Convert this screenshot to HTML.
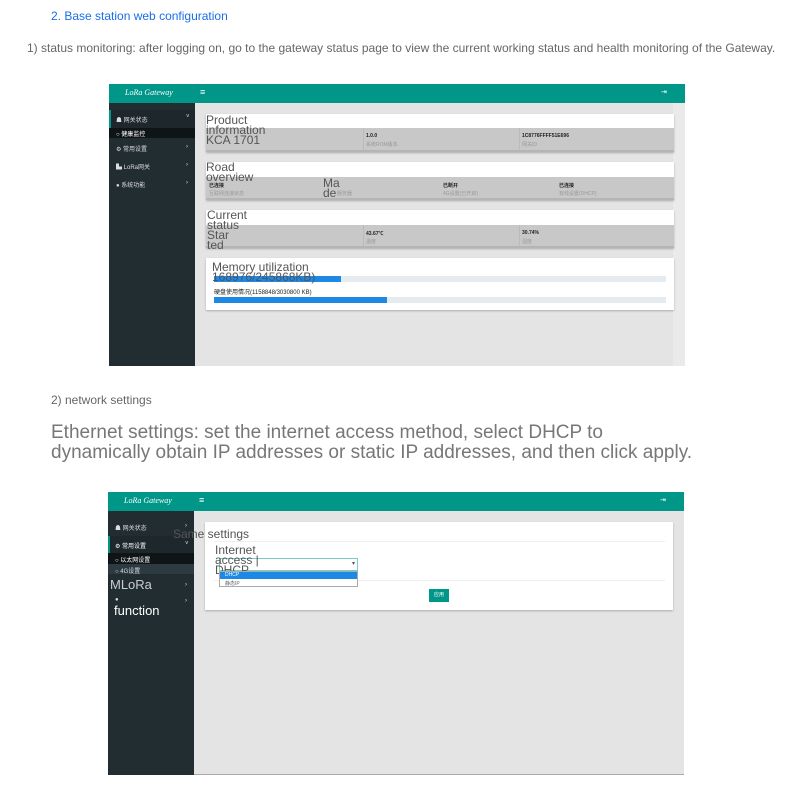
<!DOCTYPE html>
<html><head><meta charset="utf-8"><style>
*{margin:0;padding:0;box-sizing:border-box}
body{width:791px;height:788px;background:#fff;position:relative;overflow:hidden;font-family:"Liberation Sans","Noto Sans CJK SC",sans-serif;color:#555}
.a{position:absolute;white-space:nowrap}
.hdr{background:#009688}
.side{background:#222d32}
.cnt{background:#e4e4e4}
.card{background:#fff;box-shadow:0 1px 2px rgba(0,0,0,.25)}
.row{background:#c8c8c8;border-bottom:2px solid #b5b5b5}
.s{font-size:5px;color:#222;font-weight:bold}
.t{font-size:5px;color:#999}
.m{font-size:6px;color:#ddd}
.big{font-size:12px;color:#555;line-height:10px}
</style></head><body>
<div class="a" style="left:51px;top:9px;font-size:12px;color:#1a6ee8">2. Base station web configuration</div>
<div class="a" style="left:27px;top:41px;font-size:12px;color:#666">1) status monitoring: after logging on, go to the gateway status page to view the current working status and health monitoring of the Gateway.</div>

<div class="a cnt" style="left:109px;top:84px;width:576px;height:282px"></div>
<div class="a" style="left:673px;top:102px;width:12px;height:264px;background:#eaeaea"></div>
<div class="a hdr" style="left:109px;top:84px;width:576px;height:19px"></div>
<div class="a" style="left:125px;top:88px;font-size:8px;color:#fff;font-style:italic;font-family:'Liberation Serif',serif">LoRa Gateway</div>
<div class="a" style="left:200px;top:87px;font-size:9px;color:#fff">≡</div>
<div class="a" style="left:661px;top:88px;font-size:7px;color:#fff">⇥</div>
<div class="a side" style="left:109px;top:103px;width:86px;height:263px"></div>
<div class="a" style="left:109px;top:110px;width:86px;height:18px;background:#1e282c;border-left:2px solid #009688"></div>
<div class="a" style="left:109px;top:128px;width:86px;height:10px;background:#0f1517"></div>
<div class="a m" style="left:116px;top:115px">☗ 网关状态</div><div class="a m" style="left:186px;top:114px">˅</div>
<div class="a m" style="left:116px;top:129px;color:#fff">○ 健康监控</div>
<div class="a m" style="left:116px;top:144px">⚙ 常用设置</div><div class="a m" style="left:186px;top:144px">›</div>
<div class="a m" style="left:116px;top:162px">▙ LoRa网关</div><div class="a m" style="left:186px;top:162px">›</div>
<div class="a m" style="left:116px;top:180px">● 系统功能</div><div class="a m" style="left:186px;top:180px">›</div>

<div class="a card" style="left:206px;top:114px;width:468px;height:38px"></div>
<div class="a row" style="left:206px;top:128px;width:468px;height:24px"></div>
<div class="a" style="left:363px;top:128px;width:1px;height:22px;background:#bbb"></div>
<div class="a" style="left:519px;top:128px;width:1px;height:22px;background:#bbb"></div>
<div class="a big" style="left:206px;top:115px">Product<br>information<br>KCA 1701</div>
<div class="a s" style="left:366px;top:133px">1.0.0</div><div class="a t" style="left:366px;top:141px">系统ROM版本</div>
<div class="a s" style="left:522px;top:133px">1C8776FFFF51E696</div><div class="a t" style="left:522px;top:141px">网关ID</div>

<div class="a card" style="left:206px;top:162px;width:468px;height:38px"></div>
<div class="a row" style="left:206px;top:177px;width:468px;height:23px"></div>
<div class="a big" style="left:206px;top:162px">Road<br>overview</div>
<div class="a s" style="left:209px;top:182px">已连接</div><div class="a t" style="left:209px;top:190px">互联网连接状态</div>
<div class="a big" style="left:323px;top:178px">Ma<br>de</div><div class="a t" style="left:337px;top:190px">服务器</div>
<div class="a s" style="left:443px;top:182px">已断开</div><div class="a t" style="left:443px;top:190px">4G设置(已开启)</div>
<div class="a s" style="left:559px;top:182px">已连接</div><div class="a t" style="left:559px;top:190px">有线设置(DHCP)</div>

<div class="a card" style="left:206px;top:210px;width:468px;height:38px"></div>
<div class="a row" style="left:206px;top:225px;width:468px;height:23px"></div>
<div class="a" style="left:363px;top:225px;width:1px;height:21px;background:#bbb"></div>
<div class="a" style="left:519px;top:225px;width:1px;height:21px;background:#bbb"></div>
<div class="a big" style="left:207px;top:210px">Current<br>status<br>Star<br>ted</div>
<div class="a s" style="left:366px;top:230px">43.67℃</div><div class="a t" style="left:366px;top:238px">温度</div>
<div class="a s" style="left:522px;top:230px">30.74%</div><div class="a t" style="left:522px;top:238px">湿度</div>

<div class="a card" style="left:206px;top:258px;width:468px;height:52px"></div>
<div class="a" style="left:214px;top:276px;width:452px;height:6px;background:#e6ebef"></div>
<div class="a" style="left:214px;top:276px;width:127px;height:6px;background:#1e88e5"></div>
<div class="a big" style="left:212px;top:262px">Memory utilization<br>168976/245868KB)</div>
<div class="a" style="left:214px;top:287px;font-size:6px;color:#222">硬盘使用情况(1158848/3030800 KB)</div>
<div class="a" style="left:214px;top:297px;width:452px;height:6px;background:#e6ebef"></div>
<div class="a" style="left:214px;top:297px;width:173px;height:6px;background:#1e88e5"></div>

<div class="a" style="left:51px;top:393px;font-size:12px;color:#666">2) network settings</div>
<div class="a" style="left:51px;top:423px;font-size:19px;color:#777;line-height:20px">Ethernet settings: set the internet access method, select DHCP to<br>dynamically obtain IP addresses or static IP addresses, and then click apply.</div>

<div class="a cnt" style="left:108px;top:492px;width:576px;height:283px;border-bottom:1px solid #aaa"></div>
<div class="a hdr" style="left:108px;top:492px;width:576px;height:19px"></div>
<div class="a" style="left:124px;top:496px;font-size:8px;color:#fff;font-style:italic;font-family:'Liberation Serif',serif">LoRa Gateway</div>
<div class="a" style="left:199px;top:495px;font-size:9px;color:#fff">≡</div>
<div class="a" style="left:660px;top:496px;font-size:7px;color:#fff">⇥</div>
<div class="a side" style="left:108px;top:511px;width:86px;height:264px"></div>
<div class="a" style="left:108px;top:536px;width:86px;height:17px;background:#1e282c;border-left:2px solid #009688"></div>
<div class="a" style="left:108px;top:553px;width:86px;height:11px;background:#0f1517"></div>
<div class="a" style="left:108px;top:564px;width:86px;height:10px;background:#2c3b41"></div>
<div class="a m" style="left:115px;top:523px">☗ 网关状态</div><div class="a m" style="left:185px;top:523px">›</div>
<div class="a m" style="left:115px;top:541px;color:#fff">⚙ 常用设置</div><div class="a m" style="left:185px;top:541px">˅</div>
<div class="a m" style="left:115px;top:555px;color:#fff">○ 以太网设置</div>
<div class="a m" style="left:115px;top:566px">○ 4G设置</div>
<div class="a" style="left:110px;top:577px;font-size:13px;color:#ccc">MLoRa</div><div class="a m" style="left:185px;top:582px">›</div>
<div class="a m" style="left:115px;top:597px">●</div><div class="a m" style="left:185px;top:598px">›</div>
<div class="a" style="left:114px;top:603px;font-size:13px;color:#fff">function</div>

<div class="a card" style="left:205px;top:522px;width:468px;height:88px"></div>
<div class="a" style="left:173px;top:527px;font-size:12px;color:#555">Same settings</div>
<div class="a" style="left:214px;top:541px;width:451px;height:1px;background:#eee"></div>
<div class="a" style="left:214px;top:580px;width:451px;height:1px;background:#eee"></div>
<div class="a" style="left:219px;top:558px;width:139px;height:13px;border:1px solid #7cc;background:#fff"></div>
<div class="a" style="left:352px;top:560px;font-size:6px;color:#555">▾</div>
<div class="a big" style="left:215px;top:545px">Internet<br>access |<br>DHCP</div>
<div class="a" style="left:219px;top:571px;width:139px;height:16px;border:1px solid #aaa;background:#fff"></div>
<div class="a" style="left:220px;top:572px;width:137px;height:7px;background:#1e88e5;font-size:5px;color:#fff;padding-left:5px;line-height:7px">DHCP</div>
<div class="a t" style="left:225px;top:580px;color:#666">静态IP</div>
<div class="a" style="left:429px;top:589px;width:20px;height:13px;background:#009688;font-size:5px;color:#fff;text-align:center;line-height:13px">应用</div>
</body></html>
